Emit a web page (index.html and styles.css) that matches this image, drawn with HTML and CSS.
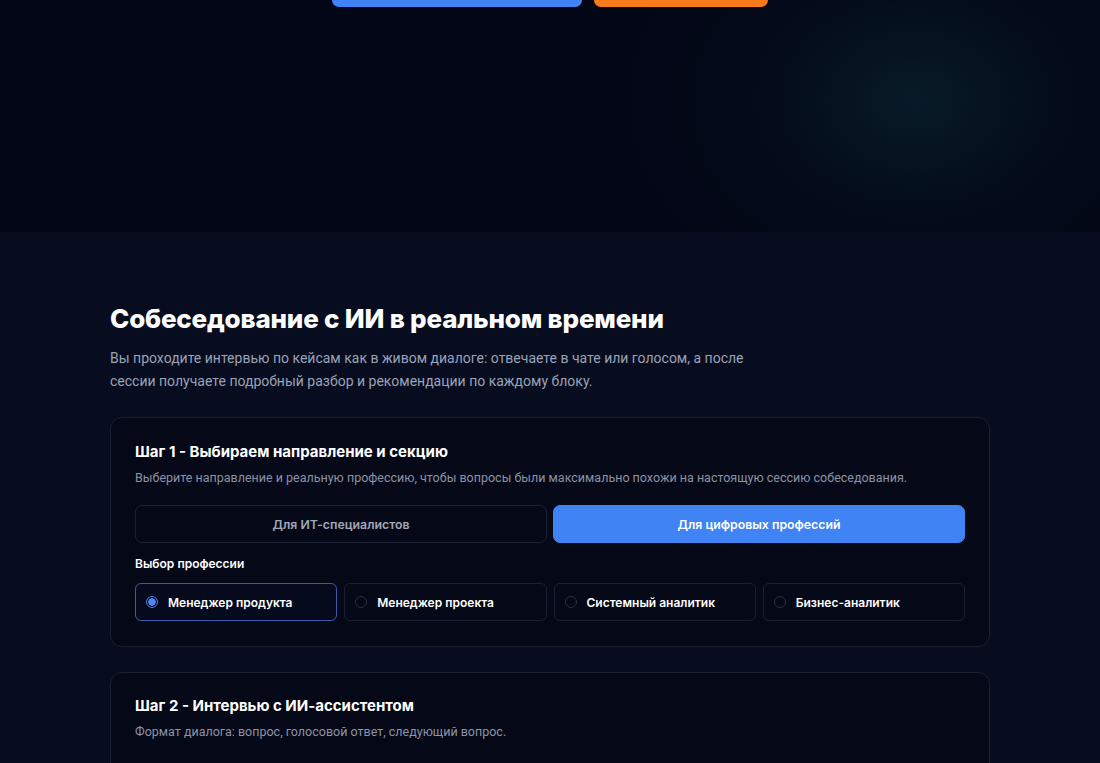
FILE: index.html
```html
<!DOCTYPE html>
<html lang="ru">
<head>
<meta charset="utf-8">
<title>Собеседование с ИИ</title>
<link rel="stylesheet" href="styles.css">
</head>
<body>
<section class="hero">
  <div class="hero-actions">
    <a class="btn btn-blue" href="#" aria-label="Начать собеседование"></a>
    <a class="btn btn-orange" href="#" aria-label="Тарифы"></a>
  </div>
</section>
<section class="interview">
  <div class="container">
    <h2 class="title">Собеседование с ИИ в реальном времени</h2>
    <p class="lead">Вы проходите интервью по кейсам как в живом диалоге: отвечаете в чате или голосом, а после сессии получаете подробный разбор и рекомендации по каждому блоку.</p>

    <div class="card">
      <h3 class="step-title">Шаг 1 - Выбираем направление и секцию</h3>
      <p class="step-desc">Выберите направление и реальную профессию, чтобы вопросы были максимально похожи на настоящую сессию собеседования.</p>
      <div class="tabs">
        <button class="tab">Для ИТ-специалистов</button>
        <button class="tab tab-active">Для цифровых профессий</button>
      </div>
      <div class="label">Выбор профессии</div>
      <div class="options">
        <div class="option option-active"><span class="radio radio-on"></span>Менеджер продукта</div>
        <div class="option"><span class="radio"></span>Менеджер проекта</div>
        <div class="option"><span class="radio"></span>Системный аналитик</div>
        <div class="option"><span class="radio"></span>Бизнес-аналитик</div>
      </div>
    </div>

    <div class="card card-2">
      <h3 class="step-title">Шаг 2 - Интервью с ИИ-ассистентом</h3>
      <p class="step-desc">Формат диалога: вопрос, голосовой ответ, следующий вопрос.</p>
      <div class="chat">
        <span class="chat-dot"></span>
      </div>
    </div>
  </div>
</section>
</body>
</html>
```
FILE: styles.css
```css
* { box-sizing: border-box; }
html, body { margin: 0; padding: 0; }
body {
  background: #070c1f;
  font-family: Inter, "Noto Sans", "Liberation Sans", sans-serif;
  color: #ffffff;
}
.hero {
  height: 232px;
  background:
    radial-gradient(ellipse 300px 230px at 915px 100px, rgba(12, 44, 54, 0.55), rgba(6, 22, 34, 0.3) 50%, rgba(3, 6, 22, 0) 100%),
    #030616;
  overflow: hidden;
}
.hero-actions {
  display: flex;
  justify-content: center;
  gap: 12px;
  margin-top: -41px;
}
.btn {
  display: block;
  height: 48px;
  border-radius: 7px;
  text-decoration: none;
}
.btn-blue { width: 250px; background: #3f83f4; }
.btn-orange { width: 174px; background: #f87a1a; }

.interview {
  padding: 70px 0 40px;
}
.container {
  width: 880px;
  margin: 0 auto;
}
.title {
  margin: 0;
  font-size: 26px;
  line-height: 34px;
  font-weight: 800;
  letter-spacing: -0.2px;
  color: #ffffff;
}
.lead {
  margin: 11px 0 24px;
  max-width: 665px;
  font-family: Roboto, Inter, sans-serif;
  font-size: 14px;
  line-height: 23px;
  color: #9ba3b8;
}
.card {
  background: #050817;
  border: 1px solid #1a2032;
  border-radius: 12px;
  padding: 23px 24px 25px;
  margin-bottom: 25px;
}
.card-2 { padding-top: 22px; }
.step-title {
  margin: 0;
  font-size: 15px;
  line-height: 22px;
  font-weight: 700;
  color: #ffffff;
}
.step-desc {
  margin: 6px 0 0;
  font-family: Roboto, Inter, sans-serif;
  font-size: 12.5px;
  line-height: 18px;
  color: #8c93a6;
}
.tabs {
  display: grid;
  grid-template-columns: 1fr 1fr;
  gap: 6px;
  margin-top: 18px;
}
.tab {
  height: 38px;
  border: 1px solid #1a2032;
  background: transparent;
  border-radius: 7px;
  font-family: inherit;
  font-size: 12.3px;
  font-weight: 600;
  color: #a2a8b8;
}
.tab-active {
  background: #3f83f4;
  border-color: #3f83f4;
  color: #ffffff;
}
.label {
  margin-top: 13px;
  font-size: 12px;
  line-height: 16px;
  font-weight: 600;
  color: #ffffff;
}
.options {
  display: grid;
  grid-template-columns: repeat(4, 1fr);
  gap: 7px;
  margin-top: 11px;
}
.option {
  display: flex;
  align-items: center;
  gap: 10px;
  height: 38px;
  padding: 0 10px;
  border: 1px solid #1a2032;
  border-radius: 6px;
  background: #050817;
  font-size: 12px;
  font-weight: 600;
  color: #ffffff;
}
.option-active {
  border-color: #3b5cab;
  background: #060a1d;
}
.radio {
  width: 12px;
  height: 12px;
  border-radius: 50%;
  border: 1px solid #2a3044;
  flex: none;
}
.radio-on {
  border: 1px solid #4b7fe6;
  background: radial-gradient(circle, #4d86f5 0 3.5px, transparent 4px);
}
.chat {
  margin-top: 22px;
  height: 40px;
  padding-left: 18px;
}
.chat-dot {
  display: block;
  width: 3px;
  height: 3px;
  background: #4d6fb3;
}
```
